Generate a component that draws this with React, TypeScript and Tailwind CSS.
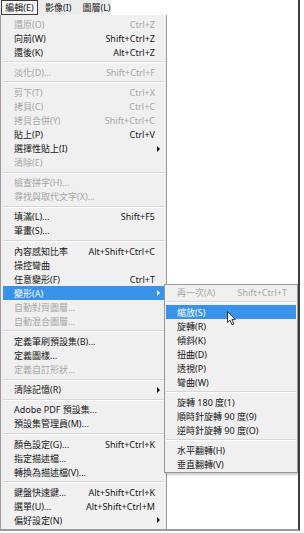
type Entry = { label: string; sc?: string; dis?: boolean; arrow?: boolean; hl?: boolean } | "sep";

const mainItems: Entry[] = [
  { label: "還原(O)", sc: "Ctrl+Z", dis: true },
  { label: "向前(W)", sc: "Shift+Ctrl+Z" },
  { label: "還後(K)", sc: "Alt+Ctrl+Z" },
  "sep",
  { label: "淡化(D)...", sc: "Shift+Ctrl+F", dis: true },
  "sep",
  { label: "剪下(T)", sc: "Ctrl+X", dis: true },
  { label: "拷貝(C)", sc: "Ctrl+C", dis: true },
  { label: "拷貝合併(Y)", sc: "Shift+Ctrl+C", dis: true },
  { label: "貼上(P)", sc: "Ctrl+V" },
  { label: "選擇性貼上(I)", arrow: true },
  { label: "清除(E)", dis: true },
  "sep",
  { label: "檢查拼字(H)...", dis: true },
  { label: "尋找與取代文字(X)...", dis: true },
  "sep",
  { label: "填滿(L)...", sc: "Shift+F5" },
  { label: "筆畫(S)..." },
  "sep",
  { label: "內容感知比率", sc: "Alt+Shift+Ctrl+C" },
  { label: "操控彎曲" },
  { label: "任意變形(F)", sc: "Ctrl+T" },
  { label: "變形(A)", arrow: true, hl: true },
  { label: "自動對齊圖層...", dis: true },
  { label: "自動混合圖層...", dis: true },
  "sep",
  { label: "定義筆刷預設集(B)..." },
  { label: "定義圖樣..." },
  { label: "定義自訂形狀...", dis: true },
  "sep",
  { label: "清除記憶(R)", arrow: true },
  "sep",
  { label: "Adobe PDF 預設集..." },
  { label: "預設集管理員(M)..." },
  "sep",
  { label: "顏色設定(G)...", sc: "Shift+Ctrl+K" },
  { label: "指定描述檔..." },
  { label: "轉換為描述檔(V)..." },
  "sep",
  { label: "鍵盤快速鍵...", sc: "Alt+Shift+Ctrl+K" },
  { label: "選單(U)...", sc: "Alt+Shift+Ctrl+M" },
  { label: "偏好設定(N)", arrow: true },
];

const subItems: Entry[] = [
  { label: "再一次(A)", sc: "Shift+Ctrl+T", dis: true },
  "sep",
  { label: "縮放(S)", hl: true },
  { label: "旋轉(R)" },
  { label: "傾斜(K)" },
  { label: "扭曲(D)" },
  { label: "透視(P)" },
  { label: "彎曲(W)" },
  "sep",
  { label: "旋轉 180 度(1)" },
  { label: "順時針旋轉 90 度(9)" },
  { label: "逆時針旋轉 90 度(O)" },
  "sep",
  { label: "水平翻轉(H)" },
  { label: "垂直翻轉(V)" },
];

const Arrow = ({ white }: { white?: boolean }) => (
  <span
    className={`ml-[2px] block h-0 w-0 border-y-[3px] border-l-[3px] border-y-transparent ${
      white ? "border-l-white" : "border-l-[#111]"
    }`}
  />
);

const Separator = ({ sub }: { sub?: boolean }) => (
  <div className={`flex items-center ${sub ? "mx-[1px] h-[6px]" : "ml-[2px] mr-[1px] h-[6.2px]"}`}>
    <div className="h-[2px] w-full border-t border-b border-t-[#d7d7d7] border-b-white" />
  </div>
);

const Row = ({ item, sub }: { item: Exclude<Entry, "sep">; sub?: boolean }) => {
  const color = item.hl ? "text-white" : item.dis ? "text-[#a6a6a6]" : "text-[#161616]";
  return (
    <div
      className={`flex items-center ${sub ? "mx-[1px] h-[14px] pl-[11px] pr-[9px]" : "mx-[2px] h-[14.02px] pl-[11px]"} ${
        item.hl ? "bg-[#3a93ea]" : ""
      } ${color}`}
    >
      <span className="flex-1 whitespace-nowrap">{item.label}</span>
      {item.sc && <span className="whitespace-nowrap">{item.sc}</span>}
      {!sub && <span className="flex w-[9px] items-center">{item.arrow && <Arrow white={item.hl} />}</span>}
    </div>
  );
};

const Menu = ({ items, sub }: { items: Entry[]; sub?: boolean }) => (
  <div className="flex flex-col">
    {items.map((item, i) =>
      item === "sep" ? <Separator key={i} sub={sub} /> : <Row key={i} item={item} sub={sub} />
    )}
  </div>
);

export default function App() {
  return (
    <div className="relative h-[533px] w-[304px] bg-white font-['Noto_Sans','Noto_Sans_CJK_TC',sans-serif] text-[9px] leading-none">
      <div className="flex h-[531px] w-[300px] flex-col overflow-hidden border-r-2 border-b-2 border-r-[#3c3c3c] border-b-[#9a9a9a]">
        {/* menu bar */}
        <div className="flex h-[16px] w-[111px] items-center whitespace-nowrap bg-[#ececec] pl-[1px] text-[#161616]">
          <span className="flex h-[15px] w-[37px] shrink-0 items-center justify-center border border-[#3a3a3a] bg-[#f7f7f7]">編輯(E)</span>
          <span className="ml-[7px] shrink-0">影像(I)</span>
          <span className="ml-[11px] shrink-0">圖層(L)</span>
        </div>

        <div className="flex items-start">
          {/* main menu */}
          <div className="h-[520px] w-[167px] shrink-0 border-x border-[#9a9a9a] bg-[#f0f0f0] pt-[2px]">
            <Menu items={mainItems} />
          </div>

          {/* transform submenu */}
          <div className="-ml-[3px] mt-[269px] w-[134px] shrink-0 border border-[#979797] bg-[#f0f0f0] pb-[1px] shadow-[2px_2px_2px_rgba(0,0,0,0.2)]">
            <Menu items={subItems} sub />
          </div>
        </div>
      </div>

      {/* mouse pointer */}
      <svg className="absolute left-[227px] top-[311px]" width="10" height="15" viewBox="0 0 10 15">
        <path
          d="M0.5 0.5 L0.5 11.5 L3 9.2 L5 13.8 L6.8 13 L4.9 8.6 L8.3 8.6 Z"
          fill="white"
          stroke="#222"
          strokeWidth="0.9"
          strokeLinejoin="round"
        />
      </svg>
    </div>
  );
}
